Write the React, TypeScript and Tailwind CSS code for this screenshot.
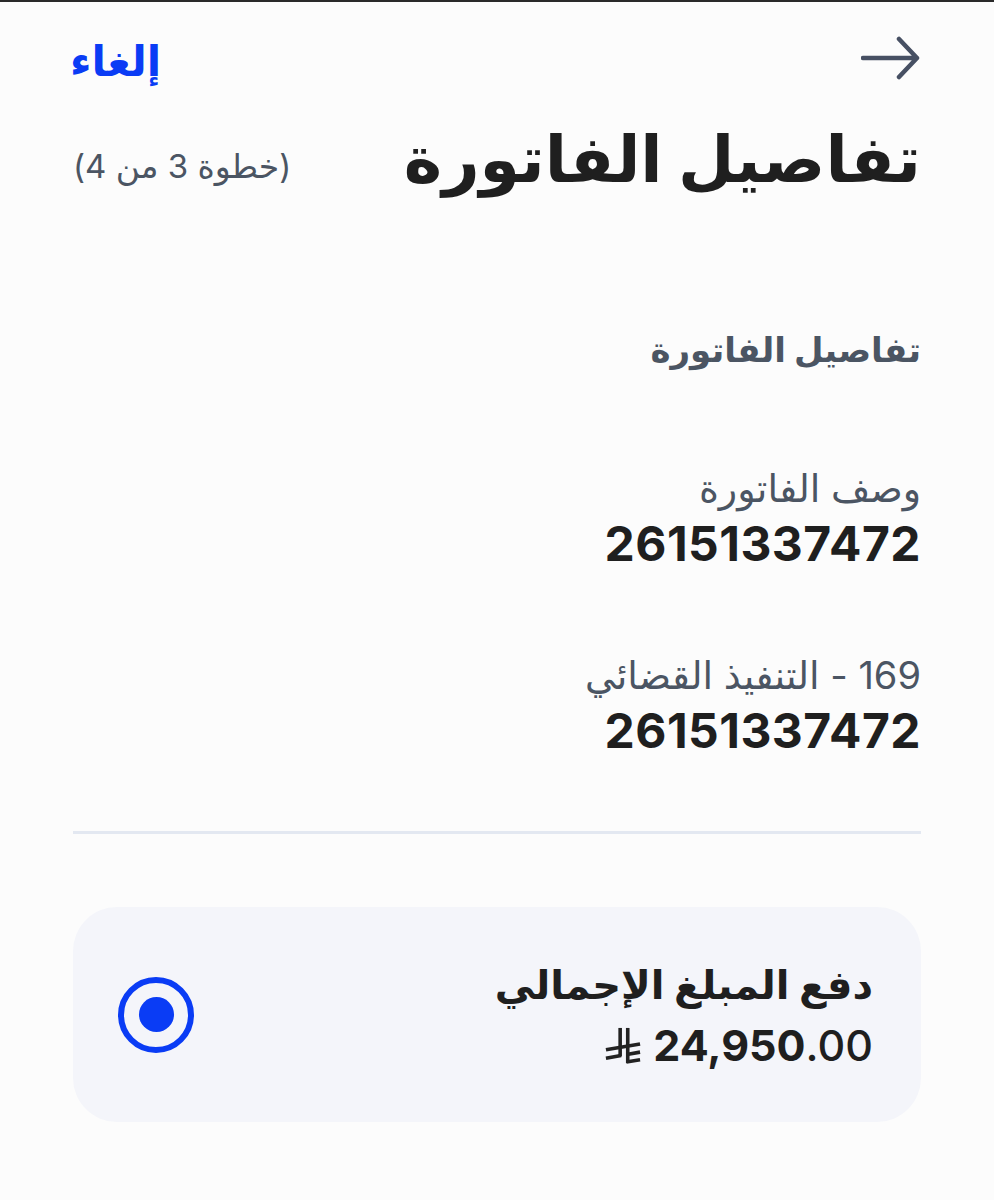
import { useState } from "react"

const FONT = { fontFamily: '"Inter", "DejaVu Sans", sans-serif' }

function BackArrow() {
  return (
    <svg width="60" height="46" viewBox="0 0 60 46" fill="none" className="text-[#475063]">
      <path d="M2 23 H56 M38 4 L56 23 L38 42" stroke="currentColor" strokeWidth="4.5" strokeLinecap="round" strokeLinejoin="round" />
    </svg>
  )
}

// new Saudi riyal sign, drawn by hand
function RiyalSign() {
  return (
    <svg width="36" height="40" viewBox="0 0 38 40" fill="none" className="text-[#222]">
      <g stroke="currentColor" strokeWidth="3.8">
        <path d="M16 2 V32" />
        <path d="M24 2 V39" />
        <path d="M1 25 L37 19" />
        <path d="M1 34 L17 31" />
        <path d="M23 30 L37 27.5" />
        <path d="M22.5 38 L37 35.5" />
      </g>
    </svg>
  )
}

function Field({ label, value }: { label: string; value: string }) {
  return (
    <div className="flex flex-col">
      <span className="text-[38px] leading-[52px] text-[#4b5563]">{label}</span>
      <span className="text-[48px] leading-[60px] font-bold tracking-[0.01em] text-[#1f1f1f]">{value}</span>
    </div>
  )
}

export default function App() {
  const [selected, setSelected] = useState(true)

  return (
    <div dir="rtl" style={FONT} className="min-h-[1200px] w-[994px] border-t-2 border-[#2a2a2a] bg-[#fcfcfc] px-[73px]">
      <div className="flex h-[112px] items-center justify-between">
        <button aria-label="رجوع" className="ml-[4px]">
          <BackArrow />
        </button>
        <button className="-ml-[3px] pt-[4px] text-[42px] font-bold text-[#0a3cf5]">إلغاء</button>
      </div>

      <div className="flex items-center justify-between">
        <h1 className="text-[65px] font-bold leading-[90px] text-[#1f1f1f]">تفاصيل الفاتورة</h1>
        <span className="pt-[16px] text-[33px] text-[#4b5563]">(خطوة 3 من 4)</span>
      </div>

      <h2 className="mt-[120px] text-[34px] font-bold leading-[51px] text-[#4b5563]">تفاصيل الفاتورة</h2>

      <div className="mt-[87px] flex flex-col gap-[75px]">
        <Field label="وصف الفاتورة" value="26151337472" />
        <Field label="169 - التنفيذ القضائي" value="26151337472" />
      </div>

      <div className="mt-[70px] h-[3px] bg-[#e3e8f1]" />

      <button
        onClick={() => setSelected(!selected)}
        className="mt-[73px] flex h-[215px] w-full items-center justify-between rounded-[44px] bg-[#f4f5fa] pl-[45px] pr-[48px]"
      >
        <div className="flex flex-col items-start">
          <span className="text-[40px] font-bold leading-[60px] text-[#1f1f1f]">دفع المبلغ الإجمالي</span>
          <span className="flex items-center gap-[12px] text-[43px] leading-[60px] text-[#1f1f1f]">
            <span dir="ltr">
              <span className="font-bold">24,950</span>
              <span className="font-medium">.00</span>
            </span>
            <RiyalSign />
          </span>
        </div>
        <span className="flex h-[76px] w-[76px] items-center justify-center rounded-full border-[6px] border-[#0a3cf5]">
          {selected && <span className="h-[35px] w-[35px] rounded-full bg-[#0a3cf5]" />}
        </span>
      </button>
    </div>
  )
}
